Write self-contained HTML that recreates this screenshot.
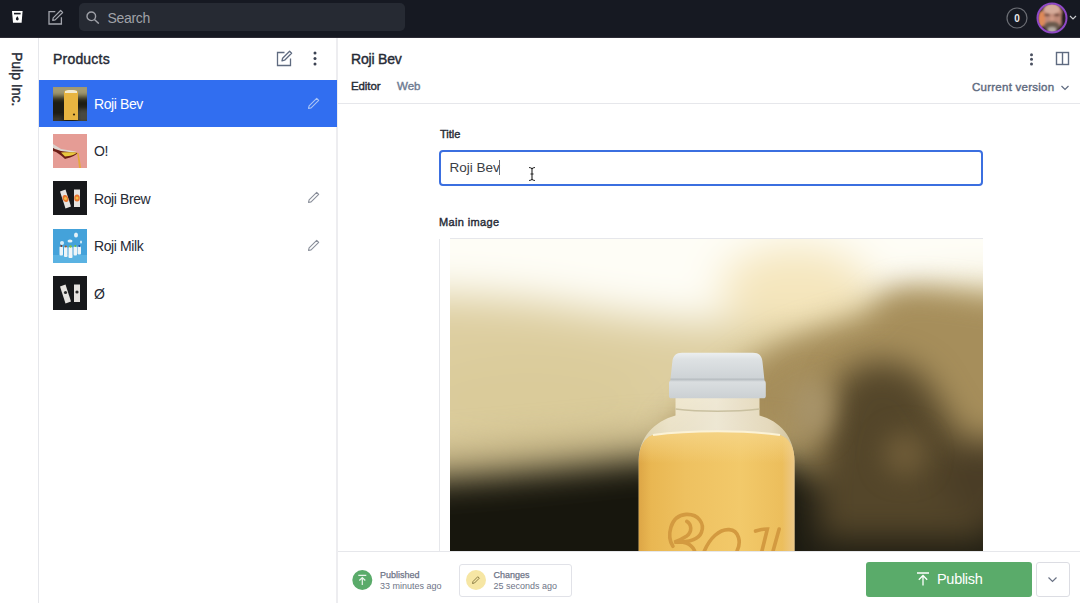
<!DOCTYPE html>
<html><head><meta charset="utf-8">
<style>
*{box-sizing:border-box;margin:0;padding:0}
html,body{width:1080px;height:603px;overflow:hidden;background:#fff;font-family:"Liberation Sans",sans-serif;color:#262a35}
.a{position:absolute;white-space:nowrap;line-height:1}
#top{left:0;top:0;width:1080px;height:38px;background:#161922;border-bottom:1px solid #2c2b35}
#search{left:79px;top:3px;width:326px;height:28px;background:#262a33;border-radius:5px}
.txt{font-size:14px;letter-spacing:-0.4px}
.b{font-weight:normal;-webkit-text-stroke:0.4px currentColor}
.row{position:absolute;left:39px;width:297.6px;height:47.4px}
.sel{background:#316ef0}
.th{position:absolute;width:34px;height:34px;overflow:hidden}
.vline{position:absolute;background:#e6e7eb}
</style></head><body>
<!-- top bar -->
<div id="top" class="a"></div>
<svg class="a" style="left:12px;top:11px" width="11" height="12" viewBox="0 0 11 12">
  <path d="M0 0H10.6L9.6 11.8H1Z" fill="#fff"/>
  <rect x="2" y="1.8" width="6.6" height="1.6" fill="#161922"/>
  <path d="M5.3 5.2C4.5 6.4 3.9 7.3 3.9 8.1a1.4 1.4 0 0 0 2.8 0c0-0.8-0.6-1.7-1.4-2.9z" fill="#161922"/>
</svg>
<svg class="a" style="left:47px;top:9px" width="17" height="16" viewBox="0 0 17 16">
  <path d="M8.3 2.6H2v12.4h12.4V8.2" fill="none" stroke="#a3a5ad" stroke-width="1.3"/>
  <path d="M5.7 11.4l0.5-2.5 7.4-7.4 2 2-7.4 7.4z" fill="none" stroke="#a3a5ad" stroke-width="1.2" stroke-linejoin="round"/>
</svg>
<div id="search" class="a"></div>
<svg class="a" style="left:86px;top:11px" width="14" height="13" viewBox="0 0 14 13">
  <circle cx="5.3" cy="5.3" r="4.3" fill="none" stroke="#9fa1a8" stroke-width="1.4"/>
  <path d="M8.4 8.4l4.4 4.2" stroke="#9fa1a8" stroke-width="1.4"/>
</svg>
<div class="a txt" style="left:107.5px;top:10.5px;color:#a0a2a8;font-size:14px;letter-spacing:-0.3px">Search</div>
<svg class="a" style="left:1006px;top:7px" width="22" height="22" viewBox="0 0 22 22">
  <circle cx="11" cy="11" r="10" fill="none" stroke="#6b6d74" stroke-width="1.2"/>
  <text x="11" y="14.6" text-anchor="middle" font-family="Liberation Sans" font-weight="bold" font-size="10" fill="#e8e8ea">0</text>
</svg>
<svg class="a" style="left:1036px;top:1.5px" width="32" height="32" viewBox="0 0 32 32">
  <defs><clipPath id="av"><circle cx="16" cy="16" r="14"/></clipPath>
  <filter id="avb" x="-20%" y="-20%" width="140%" height="140%"><feGaussianBlur stdDeviation="1.3"/></filter></defs>
  <g clip-path="url(#av)">
    <rect width="32" height="32" fill="#2c2224"/>
    <g filter="url(#avb)">
    <ellipse cx="16" cy="15" rx="11" ry="14" fill="#c08a78"/>
    <ellipse cx="16" cy="7" rx="8" ry="5" fill="#d5ab9a"/>
    <ellipse cx="5.5" cy="17" rx="3.5" ry="8" fill="#df8a58"/>
    <ellipse cx="11" cy="13" rx="3" ry="1.3" fill="#6a4438"/>
    <ellipse cx="21" cy="13" rx="3" ry="1.3" fill="#6a4438"/>
    <ellipse cx="16" cy="17" rx="2" ry="3" fill="#d09a86"/>
    <ellipse cx="16" cy="24" rx="8" ry="4.5" fill="#6b5a4e"/>
    <ellipse cx="16" cy="28" rx="4.5" ry="3" fill="#b3aaa2"/>
    <ellipse cx="28" cy="17" rx="3" ry="10" fill="#2c2224"/>
    </g>
  </g>
  <circle cx="16" cy="16" r="14.5" fill="none" stroke="#9049c8" stroke-width="2"/>
</svg>
<svg class="a" style="left:1069px;top:15px" width="8" height="6" viewBox="0 0 8 6">
  <path d="M1 1l3 3 3-3" fill="none" stroke="#c8c9cd" stroke-width="1.2"/>
</svg>

<!-- rail -->
<div class="vline" style="left:38px;top:38px;width:1px;height:565px"></div>
<div class="a b" style="left:24px;top:52px;transform-origin:0 0;transform:rotate(90deg);font-size:14px;letter-spacing:0px;color:#262a35">Pulp Inc.</div>

<!-- products list -->
<div class="vline" style="left:336px;top:38px;width:2px;height:565px;background:#ededf0"></div>
<div class="a b" style="left:53px;top:52px;font-size:14px;letter-spacing:0.2px">Products</div>
<svg class="a" style="left:276px;top:50px" width="17" height="17" viewBox="0 0 17 17">
  <path d="M8.5 2.5H1.5v13h13V8.5" fill="none" stroke="#5f6b80" stroke-width="1.3"/>
  <path d="M6 10.8l0.6-2.6 7-7 2 2-7 7z" fill="none" stroke="#5f6b80" stroke-width="1.3" stroke-linejoin="round"/>
</svg>
<svg class="a" style="left:312px;top:51px" width="6" height="15" viewBox="0 0 6 15">
  <circle cx="3" cy="2" r="1.5" fill="#3b4252"/><circle cx="3" cy="7.5" r="1.5" fill="#3b4252"/><circle cx="3" cy="13" r="1.5" fill="#3b4252"/>
</svg>

<div class="row sel" style="top:79.6px"></div>
<svg class="a" style="left:53px;top:87px" width="34" height="34" viewBox="0 0 34 34">
  <defs><filter id="tb1" x="-20%" y="-20%" width="140%" height="140%"><feGaussianBlur stdDeviation="2"/></filter></defs>
  <rect width="34" height="34" fill="#1e1d14"/>
  <g filter="url(#tb1)">
  <rect x="-4" y="-4" width="42" height="13" fill="#a39a72"/>
  <rect x="-4" y="8" width="42" height="4" fill="#5a5538"/>
  <rect x="24" y="22" width="14" height="14" fill="#4a4940"/>
  <rect x="-4" y="29" width="14" height="8" fill="#3a392e"/>
  </g>
  <path d="M11 6C11 3.5 13 3 18 3S25 3.5 25 6V33H11Z" fill="#e8b541"/>
  <path d="M12 4C13.5 2.5 22.5 2.5 24 4V6H12Z" fill="#f2ead0"/>
  <circle cx="21" cy="27.5" r="1.1" fill="#3b2a10"/>
</svg>
<div class="a txt" style="left:94px;top:96.7px;color:#fff">Roji Bev</div>
<svg class="a" style="left:307px;top:97px" width="14" height="13" viewBox="0 0 14 13"><path d="M1.5 11.5l0.6-2.6 7.6-7.6 2 2-7.6 7.6z" fill="none" stroke="#a9c3f5" stroke-width="1.1" stroke-linejoin="round"/></svg>

<svg class="a" style="left:53px;top:134px" width="34" height="34" viewBox="0 0 34 34">
  <defs><filter id="tb2"><feGaussianBlur stdDeviation="0.6"/></filter></defs>
  <rect width="34" height="34" fill="#e59c95"/>
  <g filter="url(#tb2)">
  <path d="M0 10L8 15 20 17 24 18 14 19 0 15Z" fill="#dcd5d0"/>
  <path d="M0 17C4 18 8 21 12 25 16 24 22 22 25 19 20 18 12 18 8 17 4 16 0 14 0 14Z" fill="#6b1f14"/>
  <path d="M8 18.5C12 18 18 18 24 18.5 22 21 17 22 12 22.5Z" fill="#e7c73e"/>
  <path d="M24 19C25 24 25.5 29 26 34H28C27.5 29 26.5 24 25.5 19Z" fill="#e6a83a"/>
  </g>
</svg>
<div class="a txt" style="left:94px;top:144.2px">O!</div>

<svg class="a" style="left:53px;top:181px" width="34" height="34" viewBox="0 0 34 34">
  <defs><filter id="tb3"><feGaussianBlur stdDeviation="0.5"/></filter></defs>
  <rect width="34" height="34" fill="#17181b"/>
  <g filter="url(#tb3)">
  <path d="M7 10.5L12.5 8.5 18 25.5 12.5 27.5Z" fill="#e6e3e0"/>
  <path d="M21 8.5H27V26H21Z" fill="#e6e3e0"/>
  <ellipse cx="12.5" cy="17.5" rx="2.8" ry="3.6" fill="#e8742f" transform="rotate(-18 12.5 17.5)"/>
  <circle cx="12.5" cy="17.5" r="1.5" fill="#f2c14a"/>
  <ellipse cx="24" cy="17" rx="2.8" ry="3.6" fill="#e8742f"/>
  <circle cx="24" cy="17" r="1.5" fill="#f2c14a"/>
  
  </g>
</svg>
<div class="a txt" style="left:94px;top:191.7px">Roji Brew</div>
<svg class="a" style="left:307px;top:191px" width="14" height="13" viewBox="0 0 14 13"><path d="M1.5 11.5l0.6-2.6 7.6-7.6 2 2-7.6 7.6z" fill="none" stroke="#8a8f9a" stroke-width="1.1" stroke-linejoin="round"/></svg>

<svg class="a" style="left:53px;top:229px" width="34" height="34" viewBox="0 0 34 34">
  <defs><filter id="tb4"><feGaussianBlur stdDeviation="0.6"/></filter></defs>
  <rect width="34" height="34" fill="#44a2da"/>
  <g filter="url(#tb4)">
  <rect x="0" y="26" width="34" height="8" fill="#5ab2e2"/>
  <rect x="6.5" y="17.5" width="3.5" height="9" rx="1" fill="#eef4f8"/>
  <rect x="11" y="18" width="3.5" height="10" rx="1" fill="#eef4f8"/>
  <rect x="15.5" y="18" width="4" height="11" rx="1" fill="#f3f6f8"/>
  <rect x="20.5" y="17.5" width="3.5" height="9" rx="1" fill="#eef4f8"/>
  <rect x="24.5" y="17.5" width="3.5" height="8" rx="1" fill="#eef4f8"/>
  <circle cx="8.3" cy="17" r="1" fill="#7a3b2a"/><circle cx="12.8" cy="17.5" r="1" fill="#a0582a"/><circle cx="17.5" cy="17.5" r="1.2" fill="#8bc43a"/><circle cx="22.3" cy="17" r="1" fill="#6cbf3a"/><circle cx="26.3" cy="17" r="1" fill="#2a4ea8"/>
  <ellipse cx="9" cy="14" rx="2" ry="2" fill="#d8ecf7"/><ellipse cx="17" cy="12" rx="2.5" ry="1.5" fill="#e6f2f8"/><ellipse cx="23" cy="6" rx="2" ry="2.5" fill="#e6f2f8"/><ellipse cx="28" cy="13" rx="1" ry="1.5" fill="#d8ecf7"/>
  </g>
</svg>
<div class="a txt" style="left:94px;top:239.2px">Roji Milk</div>
<svg class="a" style="left:307px;top:239px" width="14" height="13" viewBox="0 0 14 13"><path d="M1.5 11.5l0.6-2.6 7.6-7.6 2 2-7.6 7.6z" fill="none" stroke="#8a8f9a" stroke-width="1.1" stroke-linejoin="round"/></svg>

<svg class="a" style="left:53px;top:276px" width="34" height="34" viewBox="0 0 34 34">
  <defs><filter id="tb5"><feGaussianBlur stdDeviation="0.5"/></filter></defs>
  <rect width="34" height="34" fill="#17181b"/>
  <g filter="url(#tb5)">
  <path d="M7 10.5L12.5 8.5 18 25.5 12.5 27.5Z" fill="#e6e3e0"/>
  <path d="M21 8.5H27V26H21Z" fill="#e6e3e0"/>
  <circle cx="12.5" cy="16.5" r="1.6" fill="#2a2a2a"/>
  <circle cx="24" cy="16" r="1.6" fill="#2a2a2a"/>
  
  </g>
</svg>
<div class="a txt" style="left:94px;top:286.7px">Ø</div>

<!-- document header -->
<div class="a b" style="left:351px;top:52px;font-size:14px;letter-spacing:-0.2px">Roji Bev</div>
<div class="a b" style="left:351px;top:80.5px;font-size:11.5px;letter-spacing:-0.1px">Editor</div>
<div class="a b" style="left:397px;top:80.5px;font-size:11.5px;letter-spacing:0px;color:#6e7b91">Web</div>
<svg class="a" style="left:1029px;top:53px" width="5" height="13" viewBox="0 0 5 13">
  <circle cx="2.5" cy="1.7" r="1.5" fill="#4a5060"/><circle cx="2.5" cy="6.3" r="1.5" fill="#4a5060"/><circle cx="2.5" cy="11" r="1.5" fill="#4a5060"/>
</svg>
<svg class="a" style="left:1055px;top:51px" width="15" height="15" viewBox="0 0 15 15">
  <rect x="1.5" y="1.5" width="12" height="12" fill="none" stroke="#5f6b80" stroke-width="1.4"/>
  <path d="M7.5 1.5v12" stroke="#5f6b80" stroke-width="1.4"/>
</svg>
<div class="a b" style="left:972px;top:82px;font-size:11.5px;letter-spacing:0.25px;color:#5f6b80">Current version</div>
<svg class="a" style="left:1060px;top:84px" width="10" height="8" viewBox="0 0 10 8">
  <path d="M1.5 2l3.5 3.5 3.5-3.5" fill="none" stroke="#5f6b80" stroke-width="1.2"/>
</svg>
<div class="a" style="left:338px;top:102.5px;width:742px;height:1px;background:#e6e7eb"></div>

<!-- form -->
<div class="a b" style="left:440px;top:128.7px;font-size:11px">Title</div>
<div class="a" style="left:438.5px;top:149.5px;width:544.5px;height:36px;border:2px solid #3b6fe0;border-radius:4px"></div>
<div class="a" style="left:449.5px;top:160.5px;font-size:13.5px;color:#3a3d45">Roji Bev</div>
<div class="a" style="left:498.6px;top:159.8px;width:1px;height:15px;background:#6b6e76"></div>
<svg class="a" style="left:528px;top:166px" width="8" height="16" viewBox="0 0 8 16">
  <path d="M1 1.5c1.5 0 2.5 0.5 3 1.5 0.5-1 1.5-1.5 3-1.5M4 3v10M1 14.5c1.5 0 2.5-0.5 3-1.5 0.5 1 1.5 1.5 3 1.5M2.5 8h3" fill="none" stroke="#222" stroke-width="1.1"/>
</svg>

<div class="a b" style="left:439px;top:216.7px;font-size:11px;letter-spacing:0.35px">Main image</div>
<div class="vline" style="left:439px;top:238.5px;width:1px;height:313px"></div>
<div class="a" style="left:982px;top:238px;width:1px;height:313.5px;background:#e6e7eb"></div>
<div class="a" style="left:450px;top:238px;width:532.5px;height:313.5px;border-top:1px solid #e6e7eb;overflow:hidden">
  <div id="photo" style="position:absolute;left:0;top:0;width:532.5px;height:313px;overflow:hidden;background:#d6c593">
<svg style="position:absolute;left:-100px;top:-100px;filter:blur(20px)" width="732" height="513" viewBox="-100 -100 732 513">
  <rect x="-100" y="-100" width="732" height="513" fill="#ddcea0"/>
  <path d="M-100 -100H632V48C560 46 480 50 440 56 400 64 360 76 300 84 240 86 180 78 100 64 60 58 0 54 -100 54Z" fill="#fefdf6"/>
  <ellipse cx="345" cy="50" rx="75" ry="42" fill="#f5e6bd"/>
  <ellipse cx="80" cy="160" rx="120" ry="45" fill="#dacb9a"/>
</svg>
<svg style="position:absolute;left:-100px;top:-100px;filter:blur(14px)" width="732" height="513" viewBox="-100 -100 732 513">
  <path d="M215 190C250 160 300 112 350 96 380 86 400 80 412 78 428 60 440 50 458 49 490 49 520 56 632 70V413H215Z" fill="#a68e5b"/>
</svg>
<svg style="position:absolute;left:-100px;top:-100px;filter:blur(16px)" width="732" height="513" viewBox="-100 -100 732 513">
  <path d="M-100 215C0 210 100 200 190 192 250 190 320 194 360 200V413H-100Z" fill="#b0a070" opacity="0.7"/>
  <path d="M-100 246C0 242 100 232 190 222 250 218 320 220 360 226V413H-100Z" fill="#17160d"/>
  <path d="M340 238C400 240 480 250 632 255V413H340Z" fill="#1f1d13"/>
</svg>

<svg style="position:absolute;left:-100px;top:-100px;filter:blur(16px)" width="732" height="513" viewBox="-100 -100 732 513">
  <path d="M395 135C420 115 455 120 475 140 495 170 510 205 540 230V300H370C365 235 372 170 395 135Z" fill="#54462a"/>
  <ellipse cx="540" cy="240" rx="50" ry="40" fill="#4a3d26"/>
</svg>
<svg style="position:absolute;left:-100px;top:-100px;filter:blur(12px)" width="732" height="513" viewBox="-100 -100 732 513">
  <ellipse cx="455" cy="215" rx="22" ry="22" fill="#6f5c38"/>
  <ellipse cx="362" cy="170" rx="20" ry="30" fill="#a8946a"/>
</svg>
<svg style="position:absolute;left:0;top:0;filter:blur(0.7px)" width="532" height="313" viewBox="0 0 532 313">
  <defs>
    <linearGradient id="liq" x1="0" x2="1" y1="0" y2="0">
      <stop offset="0" stop-color="#dda646"/><stop offset="0.08" stop-color="#e9b752"/><stop offset="0.3" stop-color="#eec160"/>
      <stop offset="0.65" stop-color="#f2c96a"/><stop offset="0.92" stop-color="#ecbe5c"/><stop offset="1" stop-color="#ecc888"/>
    </linearGradient>
    <linearGradient id="liqv" x1="0" x2="0" y1="0" y2="1">
      <stop offset="0" stop-color="#f6d68a" stop-opacity="0.8"/><stop offset="0.25" stop-color="#f6d68a" stop-opacity="0"/>
    </linearGradient>
    <linearGradient id="glass" x1="0" x2="1" y1="0" y2="0">
      <stop offset="0" stop-color="#e2d8b6"/><stop offset="0.2" stop-color="#f3ecd6"/><stop offset="0.5" stop-color="#faf6e8"/><stop offset="0.85" stop-color="#efe6cc"/><stop offset="1" stop-color="#d8cba2"/>
    </linearGradient>
    <linearGradient id="cap" x1="0" x2="0" y1="0" y2="1">
      <stop offset="0" stop-color="#eceff0"/><stop offset="0.15" stop-color="#dde1e3"/>
      <stop offset="0.55" stop-color="#ced3d6"/><stop offset="0.58" stop-color="#b6bcc0"/><stop offset="0.64" stop-color="#dadee0"/><stop offset="1" stop-color="#cbd0d3"/>
    </linearGradient>
  </defs>
  <path d="M225.5 158V176.5C205 182 188.7 198 188.7 222V320H344.5V222C344.5 198 330 182 309.5 176.5V158Z" fill="url(#glass)" opacity="0.85"/>
  <path d="M225.5 170C250 173 285 173 309.5 170" fill="none" stroke="#c9c0a0" stroke-width="1.5"/>
  <path d="M188.7 222C189 206 195 199 203 196 240 191 295 191 330 196 339 199 344.5 208 344.5 222V320H188.7Z" fill="url(#liq)"/>
  <path d="M188.7 222C189 206 195 199 203 196 240 191 295 191 330 196 339 199 344.5 208 344.5 222V320H188.7Z" fill="url(#liqv)"/>
  <path d="M203 196C240 191 295 191 330 196" fill="none" stroke="#fbf2d6" stroke-width="2"/>
  <path d="M232 113.8H303C309 113.8 312 117 312.5 123L314.5 141.5C315.5 142 315.8 143 315.8 145V157C315.8 158.5 315 159.3 313.5 159.3H221.3C219.8 159.3 219 158.5 219 157V145C219 143 219.3 142 220.3 141.5L222.3 123C222.8 117 226 113.8 232 113.8Z" fill="url(#cap)"/>
  <g transform="translate(200 261.5) scale(0.1389)" fill="none" stroke="#d39a40" stroke-width="26" stroke-linecap="round">
    <path d="M165 330C120 260 140 110 260 100C350 95 395 170 370 230C345 290 260 300 190 300"/>
    <path d="M265 150C300 170 305 225 265 255C235 275 200 290 175 300C240 295 290 300 320 360"/>
    <path d="M390 367C430 270 500 205 570 210C640 215 660 300 625 367"/>
    <path d="M760 220C790 210 820 205 845 205L805 367"/>
    <path d="M930 205L885 367"/>
  </g>
</svg>
</div>
</div>

<!-- footer -->
<div class="a" style="left:338px;top:551px;width:742px;height:1px;background:#e6e7eb"></div>
<div class="a" style="left:338px;top:552px;width:742px;height:51px;background:#fff"></div>
<svg class="a" style="left:352px;top:570px" width="21" height="21" viewBox="0 0 21 21">
  <circle cx="10.3" cy="10" r="10" fill="#5aab6a"/>
  <path d="M6.3 5.3h8M10.3 7.8v7.2M7.3 10.5l3-3 3 3" fill="none" stroke="#e8f4ea" stroke-width="1.2"/>
</svg>
<div class="a b" style="left:380px;top:571px;font-size:9px;letter-spacing:0px;-webkit-text-stroke-width:0.25px;color:#6e7487">Published</div>
<div class="a" style="left:380px;top:581.5px;font-size:9px;color:#6e7487">33 minutes ago</div>

<div class="a" style="left:458.5px;top:563.5px;width:113.5px;height:33px;border:1px solid #e1e2e8;border-radius:3px"></div>
<svg class="a" style="left:466px;top:569.5px" width="21" height="21" viewBox="0 0 21 21">
  <circle cx="10" cy="10" r="10" fill="#f6e6a4"/>
  <path d="M6.5 13.5l0.5-2 4.8-4.8 1.5 1.5-4.8 4.8z" fill="none" stroke="#8a7c45" stroke-width="1"/>
</svg>
<div class="a b" style="left:493.5px;top:571px;font-size:9px;letter-spacing:0px;-webkit-text-stroke-width:0.25px;color:#6e7487">Changes</div>
<div class="a" style="left:493.5px;top:581.5px;font-size:9px;color:#6e7487">25 seconds ago</div>

<div class="a" style="left:866px;top:562px;width:165.5px;height:34.5px;background:#5aab6a;border-radius:3px"></div>
<svg class="a" style="left:916px;top:572px" width="15" height="14" viewBox="0 0 15 14">
  <path d="M1 1h12M7 3.5v10M2.8 7.7l4.2-4.2 4.2 4.2" fill="none" stroke="#fff" stroke-width="1.3"/>
</svg>
<div class="a" style="left:937px;top:572px;font-size:14.5px;letter-spacing:-0.3px;color:#fff">Publish</div>
<div class="a" style="left:1035.5px;top:562px;width:34.5px;height:34.5px;border:1px solid #dcdde3;border-radius:3px"></div>
<svg class="a" style="left:1047px;top:576px" width="11" height="7" viewBox="0 0 11 7">
  <path d="M1.5 1.5l4 4 4-4" fill="none" stroke="#6b7385" stroke-width="1.2"/>
</svg>
</body></html>
